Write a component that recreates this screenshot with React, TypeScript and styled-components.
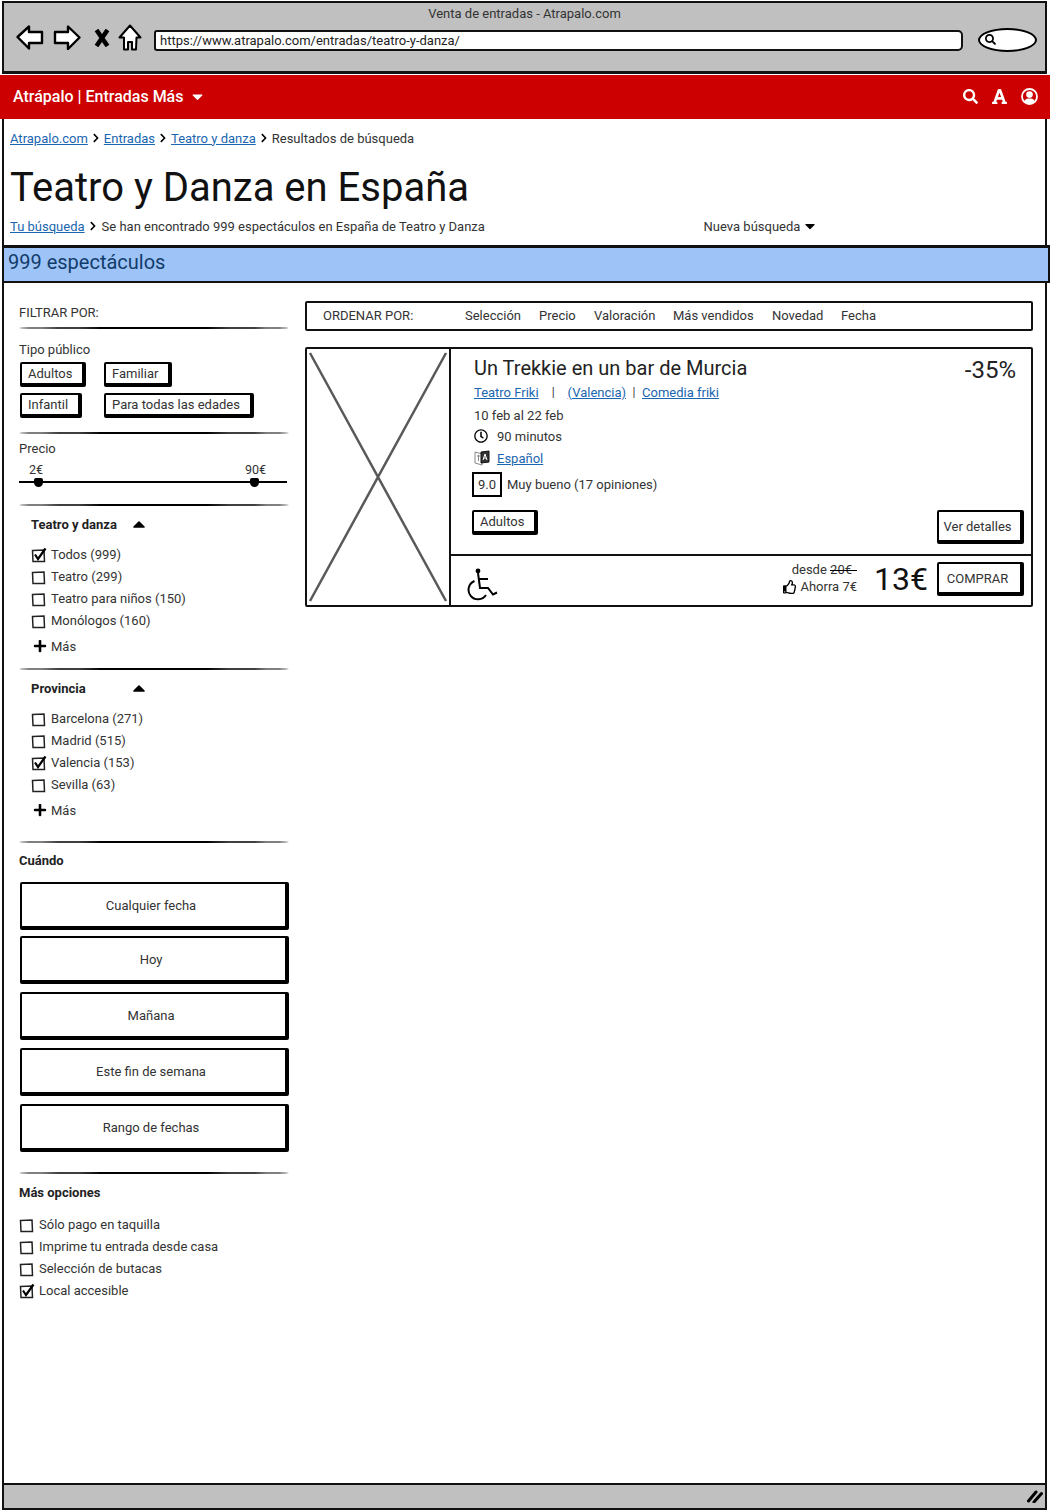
import React from "react";
import styled, { createGlobalStyle } from "styled-components";
import {
  FaCaretDown,
  FaCaretUp,
  FaChevronRight,
  FaFont,
  FaPlus,
  FaRegClock,
  FaRegThumbsUp,
  FaSearch,
} from "react-icons/fa";

const GlobalStyle = createGlobalStyle`
  html, body { margin: 0; padding: 0; background: #fff; }
  body { font-family: Roboto, "Liberation Sans", sans-serif; font-size: 13px; color: #333; }
  * { box-sizing: border-box; }
`;

const TEATRO = [
  { label: "Todos (999)", on: true },
  { label: "Teatro (299)" },
  { label: "Teatro para niños (150)" },
  { label: "Monólogos (160)" },
];
const PROVINCIAS = [
  { label: "Barcelona (271)" },
  { label: "Madrid (515)" },
  { label: "Valencia (153)", on: true },
  { label: "Sevilla (63)" },
];
const OPCIONES = [
  { label: "Sólo pago en taquilla" },
  { label: "Imprime tu entrada desde casa" },
  { label: "Selección de butacas" },
  { label: "Local accesible", on: true },
];
const FECHAS = [
  { label: "Cualquier fecha", mt: 11 },
  { label: "Hoy", mt: 6 },
  { label: "Mañana", mt: 8 },
  { label: "Este fin de semana", mt: 8 },
  { label: "Rango de fechas", mt: 8 },
];
const ORDEN = [
  { label: "Selección", w: 74 },
  { label: "Precio", w: 55 },
  { label: "Valoración", w: 79 },
  { label: "Más vendidos", w: 99 },
  { label: "Novedad", w: 69 },
  { label: "Fecha", w: 40 },
];

const CheckBox = ({ on }: { on?: boolean }) => (
  <BoxSvg width="16" height="16" viewBox="0 0 16 16">
    <path d="M1.5 3.5 L13 3 L13.5 14.5 L2 14.5 Z" fill="#fff" stroke="#222" strokeWidth="1.5" />
    {on && <path d="M4 7.5 L7 12 L14.5 1.5" fill="none" stroke="#000" strokeWidth="2.2" />}
  </BoxSvg>
);

const CheckList = ({
  items,
  $indent,
  $mt,
}: {
  items: { label: string; on?: boolean }[];
  $indent: number;
  $mt: number;
}) => (
  <List $indent={$indent} $mt={$mt}>
    {items.map((it) => (
      <CheckRow key={it.label}>
        <CheckBox on={it.on} />
        {it.label}
      </CheckRow>
    ))}
  </List>
);

const More = () => (
  <MoreRow>
    <FaPlus size={14} color="#000" />
    Más
  </MoreRow>
);

export default function App() {
  return (
    <>
      <GlobalStyle />
      <Page>
        <Toolbar>
          <WindowTitle>Venta de entradas - Atrapalo.com</WindowTitle>
          <Controls>
            <NavIcon $mr={9} width="28" height="25" viewBox="0 0 28 25">
              <path d="M1.5 12 L13 1.5 L13 7 L26 7 L26 18 L13 18 L13 23.5 Z" fill="#fff" stroke="#000" strokeWidth="2.4" strokeLinejoin="round" />
            </NavIcon>
            <NavIcon $mr={13} width="28" height="25" viewBox="0 0 28 25">
              <path d="M26.5 12.5 L15 1.5 L15 7 L2 7 L2 18 L15 18 L15 24 Z" fill="#fff" stroke="#000" strokeWidth="2.4" strokeLinejoin="round" />
            </NavIcon>
            <NavIcon $mr={8} width="16" height="18" viewBox="0 0 16 18">
              <path d="M2.5 1 L13.5 17 M13.5 1 L2.5 17" fill="none" stroke="#000" strokeWidth="4.5" />
            </NavIcon>
            <NavIcon $mr={12} width="24" height="27" viewBox="0 0 24 27">
              <path d="M1.5 13.5 L12 1.5 L22.5 13.5 L18.5 13.5 L18 25.5 L14 25.5 L14 18 L10 18 L10 25.5 L6 25.5 L6 13.5 Z" fill="#fff" stroke="#000" strokeWidth="2" strokeLinejoin="round" />
            </NavIcon>
            <UrlField>https://www.atrapalo.com/entradas/teatro-y-danza/</UrlField>
            <SearchOval>
              <FaSearch size={11} color="#000" />
            </SearchOval>
          </Controls>
        </Toolbar>

        <RedBar>
          <Brand>
            Atrápalo | Entradas Más
            <FaCaretDown size={17} />
          </Brand>
          <RedIcons>
            <FaSearch size={15} />
            <FaFont size={17} />
            <svg width="17" height="17" viewBox="0 0 17 17">
              <circle cx="8.5" cy="8.5" r="7.5" fill="none" stroke="#fff" strokeWidth="1.8" />
              <circle cx="8.5" cy="6.6" r="3.3" fill="#fff" />
              <path d="M3.2 13.6 C4 10.8 6 10.4 8.5 10.4 C11 10.4 13 10.8 13.8 13.6 C12 15.6 5 15.6 3.2 13.6 Z" fill="#fff" />
            </svg>
          </RedIcons>
        </RedBar>

        <Heading>
          <Crumbs>
            <BlueLink>Atrapalo.com</BlueLink>
            <Sep />
            <BlueLink>Entradas</BlueLink>
            <Sep />
            <BlueLink>Teatro y danza</BlueLink>
            <Sep />
            Resultados de búsqueda
          </Crumbs>
          <PageTitle>Teatro y Danza en España</PageTitle>
          <SearchLine>
            <BlueLink>Tu búsqueda</BlueLink>
            <Sep />
            <Found>Se han encontrado 999 espectáculos en España de Teatro y Danza</Found>
            <NewSearch>
              Nueva búsqueda
              <FaCaretDown size={16} color="#000" />
            </NewSearch>
          </SearchLine>
        </Heading>

        <BlueBar>999 espectáculos</BlueBar>

        <Main>
          <Sidebar>
            <SideLabel>FILTRAR POR:</SideLabel>
            <Rule $mt={4} />
            <SideLabel $mt={11}>Tipo público</SideLabel>
            <Chips>
              <Chip>Adultos</Chip>
              <Chip>Familiar</Chip>
              <Chip>Infantil</Chip>
              <Chip>Para todas las edades</Chip>
            </Chips>
            <Rule $mt={14} />
            <SideLabel $mt={5}>Precio</SideLabel>
            <PriceLabels>
              <span>2€</span>
              <span>90€</span>
            </PriceLabels>
            <Slider>
              <Knob $left={15} />
              <Knob $left={231} />
            </Slider>
            <Rule $mt={21} />

            <GroupHead $mt={8}>
              <GroupName>Teatro y danza</GroupName>
              <FaCaretUp size={20} color="#000" />
            </GroupHead>
            <CheckList items={TEATRO} $indent={12} $mt={9} />
            <More />
            <Rule $mt={12} />

            <GroupHead $mt={8}>
              <GroupName>Provincia</GroupName>
              <FaCaretUp size={20} color="#000" />
            </GroupHead>
            <CheckList items={PROVINCIAS} $indent={12} $mt={9} />
            <More />
            <Rule $mt={21} />

            <BoldLabel $mt={8}>Cuándo</BoldLabel>
            {FECHAS.map((f) => (
              <DateButton key={f.label} $mt={f.mt}>
                {f.label}
              </DateButton>
            ))}
            <Rule $mt={20} />
            <BoldLabel $mt={9}>Más opciones</BoldLabel>
            <CheckList items={OPCIONES} $indent={0} $mt={10} />
          </Sidebar>

          <Results>
            <SortBar>
              <SortLabel>ORDENAR POR:</SortLabel>
              {ORDEN.map((o) => (
                <SortItem key={o.label} style={{ width: o.w }}>
                  {o.label}
                </SortItem>
              ))}
            </SortBar>

            <Card>
              <Thumb>
                <svg width="142" height="255" viewBox="0 0 142 255">
                  <path d="M3 4 L139 252 M139 4 L3 252" fill="none" stroke="#595959" strokeWidth="2.5" />
                </svg>
              </Thumb>
              <CardBody>
                <CardTop>
                  <Info>
                    <ShowTitle>Un Trekkie en un bar de Murcia</ShowTitle>
                    <Links>
                      <BlueLink>Teatro Friki</BlueLink>
                      <Pipe $w={29}>|</Pipe>
                      <BlueLink>(Valencia)</BlueLink>
                      <Pipe $w={16}>|</Pipe>
                      <BlueLink>Comedia friki</BlueLink>
                    </Links>
                    <InfoLine $mt={5}>10 feb al 22 feb</InfoLine>
                    <InfoLine $mt={3}>
                      <IconSlot>
                        <FaRegClock size={14} color="#000" />
                      </IconSlot>
                      90 minutos
                    </InfoLine>
                    <InfoLine $mt={4}>
                      <IconSlot>
                        <svg width="16" height="16" viewBox="0 0 16 16">
                          <path d="M1 2 L8 4 L8 15 L1 13 Z" fill="#fff" stroke="#888" />
                          <path d="M7 2 L15 1 L15 12 L7 13 Z" fill="#333" stroke="#111" />
                          <path d="M9 10 L11 4 L13 10 M10 8 H12" fill="none" stroke="#fff" />
                          <path d="M3 6 H6 M4.5 5 V11" fill="none" stroke="#888" />
                        </svg>
                      </IconSlot>
                      <BlueLink>Español</BlueLink>
                    </InfoLine>
                    <ScoreRow>
                      <Score>9.0</Score>
                      Muy bueno (17 opiniones)
                    </ScoreRow>
                    <CardChip>Adultos</CardChip>
                  </Info>
                  <Aside>
                    <Discount>-35%</Discount>
                    <DetailButton>Ver detalles</DetailButton>
                  </Aside>
                </CardTop>
                <CardFooter>
                  <WheelIcon width="31" height="33" viewBox="0 0 31 33">
                    <circle cx="11" cy="3" r="2.4" fill="#000" />
                    <path d="M11 5 L13 20 L21 20 L26 26.5 L30 24.5" fill="none" stroke="#000" strokeWidth="2" />
                    <path d="M11.5 11 L21 11" fill="none" stroke="#000" strokeWidth="2" />
                    <path d="M7.5 13 A9.5 9.5 0 1 0 19 27" fill="none" stroke="#000" strokeWidth="2" />
                  </WheelIcon>
                  <PriceBlock>
                    <span>
                      desde <OldPrice>20€</OldPrice>
                    </span>
                    <Saving>
                      <FaRegThumbsUp size={14} color="#000" />
                      Ahorra 7€
                    </Saving>
                  </PriceBlock>
                  <BigPrice>13€</BigPrice>
                  <BuyButton>COMPRAR</BuyButton>
                </CardFooter>
              </CardBody>
            </Card>
          </Results>
        </Main>

        <StatusBar>
          <svg width="16" height="13" viewBox="0 0 16 13">
            <path d="M1.5 11 L9 2 M7 12 L14.5 3.5" fill="none" stroke="#000" strokeWidth="3" strokeLinecap="round" />
          </svg>
        </StatusBar>
      </Page>
    </>
  );
}

const Page = styled.div`
  width: 1050px;
  height: 1512px;
  display: flex;
  flex-direction: column;
  overflow: hidden;
`;

const Toolbar = styled.header`
  margin: 1px 3px 0 2px;
  height: 73px;
  background: #c0c0c0;
  border: 2px solid #111;
  border-bottom-width: 3px;
`;

const WindowTitle = styled.div`
  height: 20px;
  line-height: 21px;
  text-align: center;
  font-size: 13px;
`;

const Controls = styled.div`
  display: flex;
  align-items: center;
  height: 33px;
  padding-left: 12px;
`;

const NavIcon = styled.svg<{ $mr: number }>`
  flex: none;
  margin-right: ${(p) => p.$mr}px;
  margin-top: -4px;
`;

const UrlField = styled.div`
  width: 809px;
  height: 21px;
  margin-top: 1px;
  padding-left: 4px;
  line-height: 17px;
  background: #fff;
  border: 2px solid #111;
  border-radius: 3px 5px 5px 3px;
  font-size: 13px;
  color: #222;
`;

const SearchOval = styled.div`
  width: 59px;
  height: 24px;
  margin-left: 15px;
  padding-left: 5px;
  display: flex;
  align-items: center;
  background: #fff;
  border: 2px solid #000;
  border-radius: 50%;
`;

const RedBar = styled.nav`
  margin-top: 1px;
  height: 44px;
  padding: 0 12px 2px 13px;
  display: flex;
  align-items: center;
  justify-content: space-between;
  background: #cc0000;
  color: #fff;
`;

const Brand = styled.div`
  display: flex;
  align-items: center;
  gap: 6px;
  font-size: 16px;
  font-weight: 500;
`;

const RedIcons = styled.div`
  display: flex;
  align-items: center;
  gap: 13px;
`;

const Heading = styled.section`
  margin: 0 3px 0 2px;
  height: 126px;
  padding: 9px 0 0 6px;
  border-left: 2px solid #111;
  border-right: 2px solid #111;
`;

const Crumbs = styled.div`
  height: 20px;
  display: flex;
  align-items: center;
`;

const BlueLink = styled.a`
  color: #1a66b0;
  text-decoration: underline;
`;

const SepMark = styled.span`
  display: inline-flex;
  width: 16px;
  justify-content: center;
  color: #000;
`;

const Sep = () => (
  <SepMark>
    <FaChevronRight size={10} />
  </SepMark>
);

const PageTitle = styled.h1`
  margin: 16px 0 0;
  height: 48px;
  line-height: 48px;
  font-size: 40px;
  font-weight: 400;
  color: #111;
`;

const SearchLine = styled.div`
  margin-top: 4px;
  height: 20px;
  display: flex;
  align-items: center;
`;

const Found = styled.span`
  width: 602px;
  margin-left: 1px;
`;

const NewSearch = styled.span`
  display: flex;
  align-items: center;
  gap: 2px;
`;

const BlueBar = styled.div`
  margin-left: 2px;
  height: 38px;
  padding-left: 4px;
  line-height: 28px;
  background: #9dc3f7;
  border: 2px solid #111;
  border-top-width: 3px;
  font-size: 20px;
  color: #123c6b;
`;

const Main = styled.main`
  flex: 1;
  margin: 0 3px 0 2px;
  padding: 0 12px 0 15px;
  display: flex;
  gap: 16px;
  border-left: 2px solid #111;
  border-right: 2px solid #111;
`;

const Sidebar = styled.aside`
  width: 270px;
  padding-top: 20px;
`;

const SideLabel = styled.div<{ $mt?: number }>`
  height: 20px;
  line-height: 20px;
  margin-top: ${(p) => p.$mt ?? 0}px;
`;

const BoldLabel = styled(SideLabel)`
  font-weight: 700;
  color: #222;
`;

const Rule = styled.div<{ $mt: number }>`
  height: 2px;
  margin-top: ${(p) => p.$mt}px;
  background: #000;
  border-radius: 50%;
`;

const Chips = styled.div`
  margin: 2px 0 0 1px;
  display: grid;
  grid-template-columns: 84px auto;
  justify-items: start;
  row-gap: 6px;
`;

const Chip = styled.button`
  height: 25px;
  padding: 0 10px 1px 6px;
  background: #fff;
  border: solid #000;
  border-width: 2px 4px 4px 2px;
  border-radius: 2px;
  font: inherit;
  color: #333;
`;

const PriceLabels = styled.div`
  margin-top: 4px;
  height: 14px;
  line-height: 14px;
  padding: 0 23px 0 10px;
  display: flex;
  justify-content: space-between;
  font-size: 12.5px;
`;

const Slider = styled.div`
  position: relative;
  width: 268px;
  height: 2px;
  margin-top: 4px;
  background: #000;
`;

const Knob = styled.span<{ $left: number }>`
  position: absolute;
  left: ${(p) => p.$left}px;
  top: -3px;
  width: 9px;
  height: 9px;
  background: #000;
  border-radius: 2px 2px 50% 50%;
`;

const GroupHead = styled.div<{ $mt: number }>`
  height: 20px;
  margin-top: ${(p) => p.$mt}px;
  padding-left: 12px;
  display: flex;
  align-items: center;
`;

const GroupName = styled.span`
  width: 98px;
  font-weight: 700;
  color: #222;
`;

const List = styled.div<{ $indent: number; $mt: number }>`
  margin-top: ${(p) => p.$mt}px;
  padding-left: ${(p) => p.$indent}px;
`;

const BoxSvg = styled.svg`
  flex: none;
  margin-top: 2px;
`;

const CheckRow = styled.div`
  height: 22px;
  display: flex;
  align-items: center;
  gap: 4px;
`;

const MoreRow = styled.div`
  height: 20px;
  margin-top: 5px;
  padding-left: 14px;
  display: flex;
  align-items: center;
  gap: 4px;
`;

const DateButton = styled.button<{ $mt: number }>`
  display: block;
  width: 269px;
  height: 48px;
  margin: ${(p) => p.$mt}px 0 0 1px;
  padding: 0 5px 0 0;
  background: #fff;
  border: solid #000;
  border-width: 2px 4px 4px 2px;
  border-radius: 2px;
  font: inherit;
  color: #333;
`;

const Results = styled.section`
  width: 728px;
  padding-top: 18px;
`;

const SortBar = styled.div`
  height: 30px;
  padding: 0 0 2px 16px;
  display: flex;
  align-items: center;
  background: #fff;
  border: 2px solid #111;
  border-radius: 2px;
`;

const SortLabel = styled.span`
  width: 142px;
`;

const SortItem = styled.span`
  flex: none;
`;

const Card = styled.article`
  margin-top: 16px;
  height: 260px;
  display: flex;
  border: 2px solid #111;
  border-radius: 2px;
`;

const Thumb = styled.div`
  flex: none;
  width: 144px;
  border-right: 2px solid #111;
`;

const CardBody = styled.div`
  flex: 1;
  display: flex;
  flex-direction: column;
`;

const CardTop = styled.div`
  flex: 1;
  display: flex;
  justify-content: space-between;
  padding: 7px 7px 10px 23px;
  border-bottom: 2px solid #111;
`;

const Info = styled.div`
  display: flex;
  flex-direction: column;
  align-items: flex-start;
`;

const ShowTitle = styled.div`
  height: 24px;
  line-height: 24px;
  font-size: 20px;
  color: #222;
`;

const Links = styled.div`
  margin-top: 3px;
  height: 18px;
  display: flex;
  align-items: center;
`;

const Pipe = styled.span<{ $w: number }>`
  width: ${(p) => p.$w}px;
  text-align: center;
  font-size: 12px;
`;

const InfoLine = styled.div<{ $mt: number }>`
  height: 18px;
  margin-top: ${(p) => p.$mt}px;
  display: flex;
  align-items: center;
`;

const IconSlot = styled.span`
  width: 23px;
  display: flex;
  align-items: center;
`;

const ScoreRow = styled.div`
  margin: 5px 0 0 -2px;
  display: flex;
  align-items: center;
  gap: 5px;
`;

const Score = styled.span`
  width: 30px;
  height: 25px;
  line-height: 21px;
  text-align: center;
  border: 2px solid #000;
`;

const CardChip = styled(Chip)`
  margin: 13px 0 0 -2px;
`;

const Aside = styled.div`
  display: flex;
  flex-direction: column;
  align-items: flex-end;
  justify-content: space-between;
`;

const Discount = styled.div`
  margin-right: 8px;
  font-size: 24px;
  color: #222;
`;

const DetailButton = styled.button`
  width: 87px;
  height: 34px;
  padding: 0 4px 0 0;
  background: #fff;
  border: solid #000;
  border-width: 2px 4px 4px 2px;
  border-radius: 2px;
  font: inherit;
  color: #333;
`;

const CardFooter = styled.div`
  height: 49px;
  padding: 0 7px 0 16px;
  display: flex;
  align-items: center;
`;

const WheelIcon = styled.svg`
  flex: none;
  margin-top: 8px;
`;

const PriceBlock = styled.div`
  margin: -5px 0 0 auto;
  display: flex;
  flex-direction: column;
  align-items: flex-end;
  line-height: 17px;
`;

const OldPrice = styled.span`
  position: relative;
  padding-right: 5px;
  &::after {
    content: "";
    position: absolute;
    left: 0;
    right: 0;
    top: 8px;
    height: 1px;
    background: #000;
  }
`;

const Saving = styled.span`
  display: flex;
  align-items: center;
  gap: 3px;
`;

const BigPrice = styled.div`
  width: 63px;
  margin: -4px 0 0 17px;
  font-size: 32px;
  color: #111;
`;

const BuyButton = styled(DetailButton)`
  margin-top: -4px;
  padding-top: 2px;
`;

const StatusBar = styled.footer`
  margin: 0 3px 2px 2px;
  height: 27px;
  padding-right: 2px;
  display: flex;
  align-items: center;
  justify-content: flex-end;
  background: #c0c0c0;
  border: 2px solid #111;
`;
